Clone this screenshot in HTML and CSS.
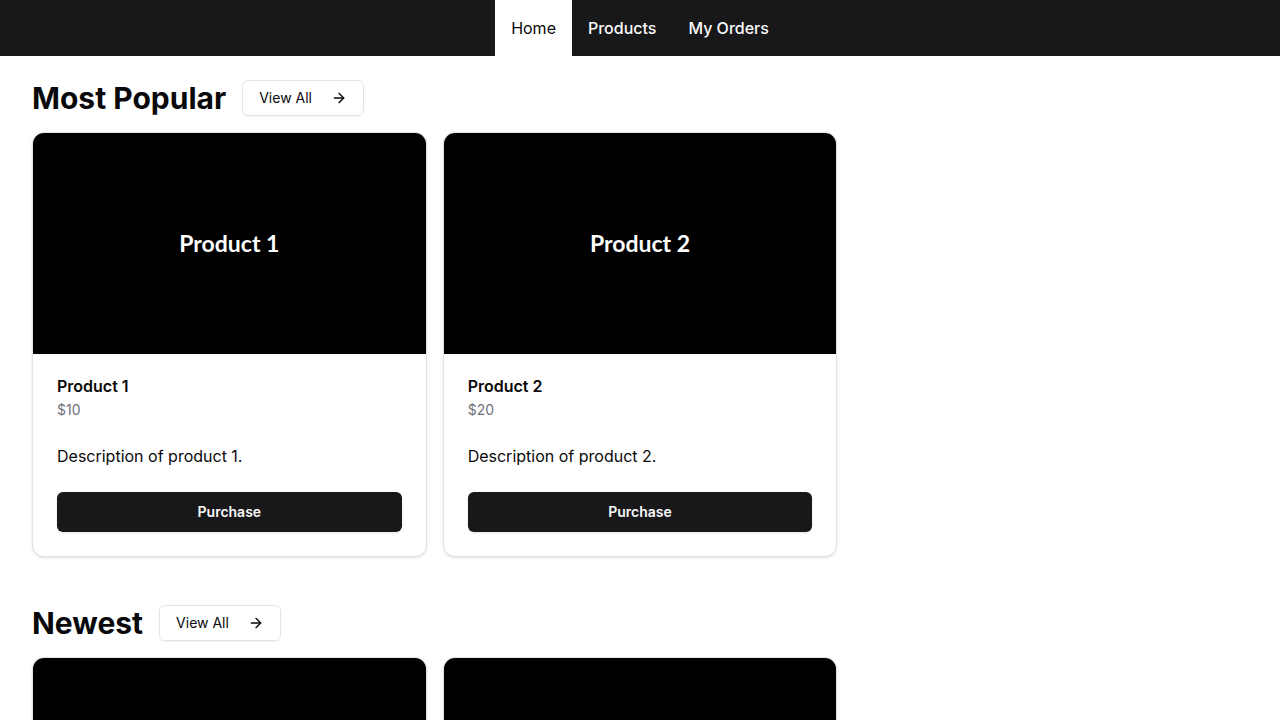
FILE: index.html
```html
<!DOCTYPE html>
<html lang="en">
<head>
<meta charset="utf-8">
<meta name="viewport" content="width=device-width, initial-scale=1">
<title>Store</title>
<link rel="stylesheet" href="styles.css">
</head>
<body>
<nav class="nav">
  <a class="nav-link active" href="#">Home</a>
  <a class="nav-link" href="#">Products</a>
  <a class="nav-link" href="#">My Orders</a>
</nav>
<main class="content">
  <section class="section">
    <div class="section-head">
      <h2 class="section-title">Most Popular</h2>
      <a class="view-all" href="#"><span>View All</span>
        <svg class="arrow" viewBox="0 0 24 24" aria-hidden="true"><path d="M5 12h14"/><path d="m12 5 7 7-7 7"/></svg></a>
    </div>
    <div class="grid">
      <article class="card">
        <div class="picture">Product 1</div>
        <div class="card-head"><h3 class="card-title">Product 1</h3><p class="price">$10</p></div>
        <p class="description">Description of product 1.</p>
        <div class="card-foot"><button class="purchase" type="button">Purchase</button></div>
      </article>
      <article class="card">
        <div class="picture">Product 2</div>
        <div class="card-head"><h3 class="card-title">Product 2</h3><p class="price">$20</p></div>
        <p class="description">Description of product 2.</p>
        <div class="card-foot"><button class="purchase" type="button">Purchase</button></div>
      </article>
    </div>
  </section>
  <section class="section">
    <div class="section-head">
      <h2 class="section-title">Newest</h2>
      <a class="view-all" href="#"><span>View All</span>
        <svg class="arrow" viewBox="0 0 24 24" aria-hidden="true"><path d="M5 12h14"/><path d="m12 5 7 7-7 7"/></svg></a>
    </div>
    <div class="grid">
      <article class="card"><div class="picture"></div></article>
      <article class="card"><div class="picture"></div></article>
    </div>
  </section>
</main>
</body>
</html>
```
FILE: styles.css
```css
* { box-sizing: border-box; }
html { scrollbar-width: none; }
body { margin: 0; background: #fff; color: #09090b; font: 400 16px/24px Inter, sans-serif; }
h2, h3, p { margin: 0; }
a { color: inherit; text-decoration: none; }
.nav { display: flex; justify-content: center; padding: 0 16px; background: #18181b; color: #fafafa; }
.nav-link { padding: 16px; font-weight: 500; }
.nav-link.active { background: #fff; color: #09090b; font-weight: 400; }
.content { padding: 24px 32px; }
.section { margin-bottom: 48px; }
.section-head { display: flex; align-items: center; gap: 16px; margin-bottom: 16px; }
.section-title { font-size: 30px; line-height: 36px; font-weight: 700; }
.view-all { display: inline-flex; align-items: center; gap: 19px; height: 36px; padding: 0 16px; border: 1px solid #e4e4e7; border-radius: 6px; font-size: 14px; line-height: 20px; box-shadow: 0 1px 2px rgba(0, 0, 0, .05); }
.arrow { width: 16px; height: 16px; fill: none; stroke: currentColor; stroke-width: 2; stroke-linecap: round; stroke-linejoin: round; }
.grid { display: grid; grid-template-columns: repeat(3, 1fr); gap: 16px; }
.card { overflow: hidden; border: 1px solid #e4e4e7; border-radius: 12px; background: #fff; box-shadow: 0 1px 3px rgba(0, 0, 0, .1), 0 1px 2px -1px rgba(0, 0, 0, .1); }
.picture { display: grid; place-items: center; aspect-ratio: 16 / 9; background: #000; color: #fff; font: 700 23px/28px Lato, sans-serif; }
.card-head { display: grid; gap: 6px; padding: 24px; }
.card-title { font-size: 16px; line-height: 16px; font-weight: 600; }
.price { font-size: 14px; line-height: 20px; color: #71717a; }
.description { padding: 0 24px 24px; }
.card-foot { padding: 0 24px 24px; }
.purchase { width: 100%; height: 40px; padding: 0 32px; border: 0; border-radius: 6px; background: #18181b; color: #fafafa; font: 600 14px/20px Inter, sans-serif; box-shadow: 0 1px 3px rgba(0, 0, 0, .1); }
```
